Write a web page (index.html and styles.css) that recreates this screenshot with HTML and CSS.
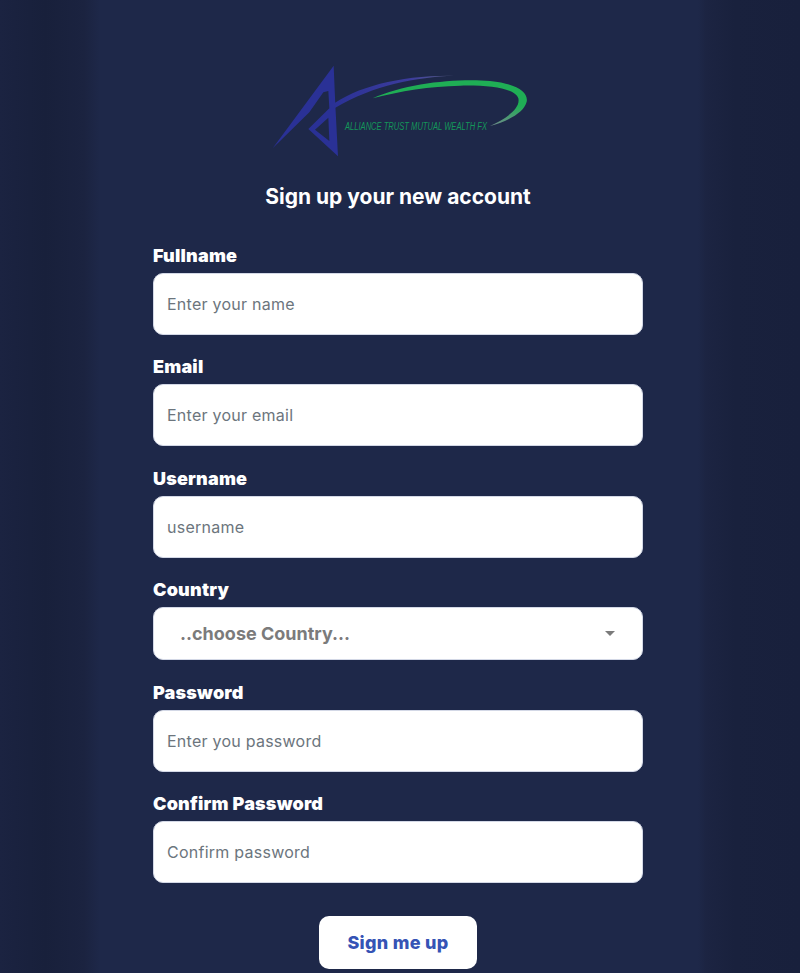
FILE: index.html
```html
<!DOCTYPE html>
<html lang="en">
<head>
<meta charset="utf-8">
<title>Sign up</title>
<link rel="stylesheet" href="styles.css">
</head>
<body>
<main class="page">
  <div class="logo-row">
    <svg class="logo" viewBox="0 0 840 330" width="280" height="110" aria-label="Alliance Trust Mutual Wealth FX">
      <defs>
        <linearGradient id="swoosh-fade" x1="212" y1="0" x2="582" y2="0" gradientUnits="userSpaceOnUse">
          <stop offset="0" stop-color="#2a3196"/>
          <stop offset=".65" stop-color="#3c3c9c"/>
          <stop offset="1" stop-color="#5d6488"/>
        </linearGradient>
        <linearGradient id="green-fade" x1="0" y1="80" x2="0" y2="213" gradientUnits="userSpaceOnUse">
          <stop offset="0" stop-color="#1fae55"/>
          <stop offset=".55" stop-color="#1fae55"/>
          <stop offset="1" stop-color="#6f8a8a"/>
        </linearGradient>
      </defs>
      <path class="a-blue" d="M221 32 L38 280 L148 172 L190 112 L205 108 L208 160 L145 222 L234 304 L226 150 Z M205 188 L165 224 L208 258 Z" fill-rule="evenodd"/>
      <path class="a-swoosh" d="M212 152 C290 95 420 60 582 62 C470 66 340 90 226 158 Z"/>
      <path class="a-green" d="M338 130 C440 84 590 70 690 78 C770 86 806 112 800 140 C792 172 745 198 690 213 C740 190 782 160 775 130 C765 100 690 90 600 92 C510 94 420 108 338 130 Z"/>
      <text class="logo-text" x="255" y="226" textLength="426" lengthAdjust="spacingAndGlyphs">ALLIANCE TRUST MUTUAL WEALTH FX</text>
    </svg>
  </div>
  <h1 class="title">Sign up your new account</h1>
  <form class="form">
    <div class="group">
      <label class="label" for="fullname">Fullname</label>
      <input class="control" id="fullname" type="text" placeholder="Enter your name">
    </div>
    <div class="group">
      <label class="label" for="email">Email</label>
      <input class="control" id="email" type="email" placeholder="Enter your email">
    </div>
    <div class="group">
      <label class="label" for="username">Username</label>
      <input class="control" id="username" type="text" placeholder="username">
    </div>
    <div class="group">
      <label class="label" for="country">Country</label>
      <div class="select-wrap">
        <select class="select" id="country">
          <option>..choose Country...</option>
        </select>
        <svg class="caret" viewBox="0 0 10 5" width="10" height="5"><path d="M0 0H10L5 5Z"/></svg>
      </div>
    </div>
    <div class="group">
      <label class="label" for="password">Password</label>
      <input class="control" id="password" type="password" placeholder="Enter you password">
    </div>
    <div class="group">
      <label class="label" for="confirm">Confirm Password</label>
      <input class="control" id="confirm" type="password" placeholder="Confirm password">
    </div>
    <div class="actions">
      <button class="submit" type="button">Sign me up</button>
    </div>
  </form>
</main>
</body>
</html>
```
FILE: styles.css
```css
* { box-sizing: border-box; }
html, body { margin: 0; height: 100%; overflow: hidden; }
body {
  font-family: Inter, "Open Sans", sans-serif;
  color: #fff;
  background: linear-gradient(90deg,
    #1b2341 0, #18203b 45px, #1b2340 84px, #1e2849 100px,
    #1e2849 698px, #1c2442 706px, #19213d 735px, #18203c 800px);
}
.page { width: 796px; padding: 55px 153px 0; }
.logo-row { display: flex; justify-content: center; padding-left: 4px; }
.logo { display: block; flex: none; }
.a-blue { fill: #2a3196; }
.a-swoosh { fill: url(#swoosh-fade); }
.a-green { fill: url(#green-fade); }
.logo-text { font-family: "Liberation Sans", sans-serif; font-style: italic; font-size: 30px; fill: #14975a; }
.title { margin: 17px 0 0; height: 30px; font-size: 21px; line-height: 30px; font-weight: 700; text-align: center; }
.form { margin-top: 31px; }
.group { margin-bottom: 19.4px; }
.label { display: block; height: 24px; margin-bottom: 6px; font-size: 18px; line-height: 25px; font-weight: 900; letter-spacing: .2px; color: #fff; }
.control {
  display: block; width: 100%; height: 62px; padding: 0 13px;
  border: 1px solid #d3d8e6; border-radius: 10px; background: #fff;
  font: 400 16px Inter, sans-serif; letter-spacing: .25px; color: #333;
}
.control::placeholder { color: #6c757d; opacity: 1; }
.select-wrap { position: relative; }
.select {
  display: block; width: 100%; height: 53px; padding: 0 26px;
  appearance: none; border: 1px solid #d3d8e6; border-radius: 10px; background: #fff;
  font: 700 18px Inter, sans-serif; color: #7b7b7b;
}
.caret { position: absolute; right: 28px; top: 24px; fill: #7b7b7b; }
.actions { display: flex; justify-content: center; margin-top: 33px; }
.submit {
  width: 158px; height: 53px; border: 0; border-radius: 10px; background: #fff;
  font: 800 18px Inter, sans-serif; letter-spacing: .3px; color: #3553b5;
}
```
